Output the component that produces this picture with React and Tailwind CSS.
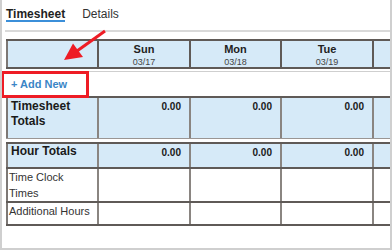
import React from "react";

const days = [
  { d: "Sun", date: "03/17" },
  { d: "Mon", date: "03/18" },
  { d: "Tue", date: "03/19" },
  { d: "", date: "" },
];
const widths = ["w-[92px]", "w-[91px]", "w-[92px]", "w-[92px]"];

function BodyRow({ h, label, values, bold, blue, labelCls }) {
  return (
    <div
      className={`flex border-t-2 border-[#5f5a57] ${blue ? "bg-[#d6eaf8]" : "bg-white"} ${h}`}
    >
      <div className={`w-[91px] shrink-0 border-l-2 border-[#7d7875] ${labelCls}`}>{label}</div>
      {widths.map((w, i) => (
        <div
          key={i}
          className={`${w} shrink-0 border-l-2 border-[#8a8581] text-right pr-[8px] ${bold ? "pt-[1px] text-[10px] leading-[15px] font-bold text-[#1a1a1a]" : ""}`}
        >
          {values ? (i < 3 ? values : "") : ""}
        </div>
      ))}
    </div>
  );
}

export default function App() {
  return (
    <div className="relative w-[392px] h-[250px] overflow-hidden border-l-2 border-r-2 border-b-2 border-[#cfcfcf] bg-white font-['Liberation_Sans',Arial,sans-serif] text-[#222]">
      <div className="flex pl-[4px] h-[30px] items-start gap-[17px]">
        <div className="pt-[8px] leading-[12px] text-[12px] font-bold text-[#1f1f1f] border-b-2 border-[#3b8fd9]">
          Timesheet
        </div>
        <div className="pt-[8px] leading-[12px] text-[12px] text-[#333]">Details</div>
      </div>
      <div className="ml-[3px] h-[2px] bg-[#d9d9d9]" />
      <div className="mt-[7px] ml-[4px] w-[460px]">
        <div className="flex h-[30px] border-t-2 border-b-2 border-[#5f5a57] bg-[#d6eaf8]">
          <div className="w-[91px] shrink-0 border-l-2 border-[#7d7875]" />
          {days.map((x, i) => (
            <div
              key={i}
              className={`${widths[i]} shrink-0 border-l-2 border-[#5f5a57] flex flex-col items-center pt-[1px]`}
            >
              <div className="text-[11px] leading-[14px] font-bold text-[#222]">{x.d}</div>
              <div className="text-[9px] leading-[12px] text-[#444]">{x.date}</div>
            </div>
          ))}
        </div>
        <div className="h-[2px]" />
        <div className="h-[25px] border-t border-[#cfcfcf] pl-[5px] text-[11px] leading-[24px] font-bold text-[#3a85c6]">
          + Add New
        </div>
        <BodyRow
          h="h-[43px] border-b border-b-[#9a9694]"
          label={<>Timesheet<br />Totals</>}
          values="0.00"
          bold
          blue
          labelCls="pl-[3px] pt-[1px] text-[12px] leading-[15px] font-bold text-[#1a1a1a]"
        />
        <div className="h-[3px]" />
        <BodyRow
          h="h-[25px]"
          label="Hour Totals"
          values="0.00"
          bold
          blue
          labelCls="pl-[3px] text-[12px] leading-[15px] font-bold text-[#1a1a1a]"
        />
        <BodyRow
          h="h-[34px]"
          label={<>Time Clock<br />Times</>}
          labelCls="pl-[1px] text-[11px] leading-[16px] text-[#333]"
        />
        <div className="border-b-2 border-[#5f5a57]">
          <BodyRow
            h="h-[23px]"
            label="Additional Hours"
            labelCls="pl-[1px] text-[11px] leading-[16px] text-[#333]"
          />
        </div>
      </div>

      <div className="absolute left-[-1px] top-[71px] w-[88px] h-[27px] border-[3px] border-[#ee1c25]" />
      <svg
        className="absolute left-[-2px] top-0 pointer-events-none"
        width="392"
        height="250"
        viewBox="0 0 392 250"
      >
        <line x1="105" y1="31" x2="77" y2="51" stroke="#ee1c25" strokeWidth="3" />
        <polygon points="64,60 73,43.5 83,57" fill="#ee1c25" />
      </svg>
    </div>
  );
}
